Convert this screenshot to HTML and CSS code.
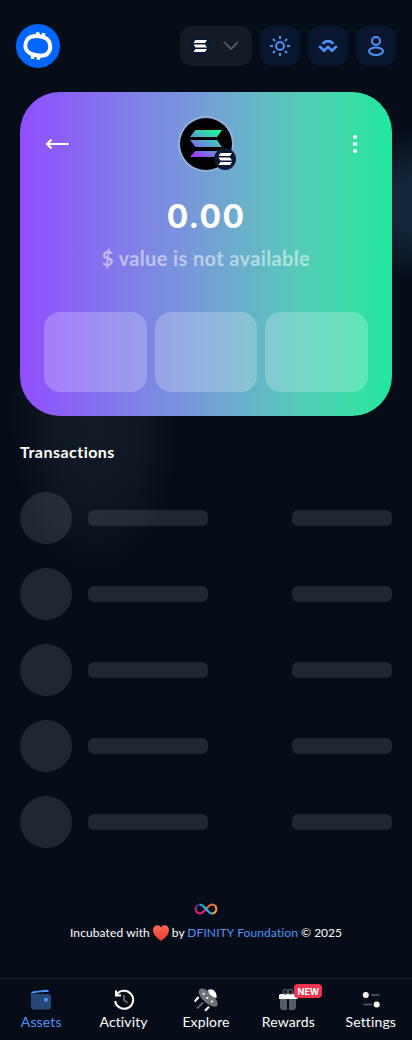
FILE: index.html
```html
<!DOCTYPE html>
<html lang="en">
<head>
<meta charset="utf-8">
<meta name="viewport" content="width=device-width, initial-scale=1">
<title>Wallet</title>
<link rel="stylesheet" href="styles.css">
</head>
<body>
<svg class="defs" width="0" height="0" aria-hidden="true">
  <defs>
    <linearGradient id="sol" gradientUnits="userSpaceOnUse" x1="36" y1="8" x2="16" y2="44"><stop offset=".1" stop-color="#19fb9b"/><stop offset=".85" stop-color="#9945ff"/></linearGradient>
    <linearGradient id="inf-left" x1="0" y1="1" x2="0" y2="0"><stop offset=".2" stop-color="#ed1e79"/><stop offset="1" stop-color="#522785"/></linearGradient>
    <linearGradient id="inf-right" x1="0" y1="0" x2="1" y2="1"><stop offset="0" stop-color="#f15a24"/><stop offset="1" stop-color="#fbb03b"/></linearGradient>
    <linearGradient id="heart" x1="0" y1="0" x2="0" y2="1"><stop offset="0" stop-color="#ff6a58"/><stop offset="1" stop-color="#e83b30"/></linearGradient>
    <symbol id="solana" viewBox="0 0 14 12"><path d="M2.500 0H14l-2 3H.5zM.5 4.500h11.500L14 7.500H2.500zM2.500 9H14l-2 3H.5z"/></symbol>
  </defs>
</svg>
<div class="app">
  <header class="header">
    <svg class="logo" viewBox="0 0 44 44">
      <circle cx="22" cy="22" r="22" fill="#06f"/>
      <g fill="none" stroke="#fff" stroke-width="4">
        <path d="M17.500 12.300C22 11.500 31 13 33 17.500C34.800 21.500 34.500 25.500 32.500 28.500C30.500 31.200 27 32 23 31.500C17.500 31 11 28.800 9.800 24.500C8.800 21 10 16.500 12.500 14.300C14 13 15.700 12.600 17.500 12.300Z"/>
        <path stroke-width="3.600" d="M22 8.200L21.400 12M27.800 9.200L27 13M17 30.500L16.400 34.800M22.700 32L22.200 35.800"/>
      </g>
    </svg>
    <div class="actions">
      <button class="network" aria-label="Network">
        <span class="net-badge"><svg width="14" height="12" fill="#fff"><use href="#solana"/></svg></span>
        <svg width="16" height="10" viewBox="0 0 16 10" fill="none" stroke="#596069" stroke-width="1.600"><path d="M1 1l7 7 7-7"/></svg>
      </button>
      <button class="icon-btn" aria-label="Theme"><svg width="20" height="20" viewBox="0 0 20 20" fill="none" stroke="#4f92f8" stroke-width="2"><circle cx="10" cy="10" r="3.900"/><path d="M10 0v3M10 17v3M0 10h3M17 10h3M3 3l2 2M15 15l2 2M3 17l2-2M15 5l2-2"/></svg></button>
      <button class="icon-btn" aria-label="WalletConnect"><svg width="20" height="14" viewBox="0 0 20 14" fill="none" stroke="#4f92f8" stroke-width="2.600"><path d="M4.700 5c2.800-3.800 7.800-3.800 10.600 0M1.200 7l4.900 4.600L10 7.800l3.900 3.800L18.800 7"/></svg></button>
      <button class="icon-btn" aria-label="Account"><svg width="18" height="20" viewBox="0 0 18 20" fill="none" stroke="#4f92f8" stroke-width="2"><circle cx="9" cy="5" r="4"/><ellipse cx="9" cy="15.200" rx="7" ry="3.800"/></svg></button>
    </div>
  </header>

  <main>
    <section class="hero">
      <div class="hero-top">
        <svg class="back" width="24" height="12" viewBox="0 0 24 12" fill="none" stroke="#fff" stroke-width="2"><path d="M2 6H23.500M6.500 1.500L2 6L6.500 10.500"/></svg>
        <div class="token">
          <svg width="52" height="52" viewBox="0 0 52 52"><circle cx="26" cy="26" r="26"/><path fill="url(#sol)" d="M15.500 12H42l-5 7H10zM10 22h27l5 7H15.500zM15.500 33H42l-5 6H10z"/></svg>
          <span class="token-badge"><svg width="14" height="12" fill="#fff"><use href="#solana"/></svg></span>
        </div>
        <svg class="more" width="4" height="18" viewBox="0 0 4 18" fill="#fff"><circle cx="2" cy="2" r="2"/><circle cx="2" cy="9" r="2"/><circle cx="2" cy="16" r="2"/></svg>
      </div>
      <div class="amount">0.00</div>
      <div class="fiat">$ value is not available</div>
      <div class="tiles"><span></span><span></span><span></span></div>
    </section>

    <h2>Transactions</h2>
    <ul class="rows">
      <li><i></i><b></b><em></em></li>
      <li><i></i><b></b><em></em></li>
      <li><i></i><b></b><em></em></li>
      <li><i></i><b></b><em></em></li>
      <li><i></i><b></b><em></em></li>
    </ul>
  </main>

  <footer class="footer">
    <svg width="24" height="12" viewBox="0 0 24 12" fill="none" stroke-width="2.200"><path stroke="url(#inf-left)" d="M12 6C9 9.300 7.900 10.500 6.200 10.500a4.500 4.500 0 0 1 0-9"/><path stroke="url(#inf-right)" d="M12 6c3-3.300 4.100-4.500 5.800-4.500a4.500 4.500 0 0 1 0 9"/><path stroke="#29abe2" d="M5.700 1.500c3 0 3.700 1.500 6.300 4.500s3.300 4.500 6.300 4.500"/></svg>
    <p><span class="f-a">Incubated with</span><svg width="18" height="16" viewBox="0 0 18 16"><path fill="url(#heart)" d="M9 16C5 13 1 9.500 1 5c0-5 6-6.500 8-2.400C11 -1.500 17 0 17 5c0 4.500-4 8-8 11z"/></svg><span class="f-b">by</span><a class="f-c">DFINITY Foundation</a><span class="f-d">© 2025</span></p>
  </footer>
</div>

<nav class="nav">
  <a class="item active"><svg width="24" height="24" viewBox="0 0 24 24"><path fill="#274779" d="M2 6h17q3 0 3 3v10q0 2.500-3 2.500H5q-3 0-3-2.500z"/><path fill="#4f92f8" d="M2 6c0-1.800 1-2.500 3-2.800l12-1.500c2-.2 2.900.5 2.900 2.500C15 3.500 8 4 2 6z"/><circle cx="17" cy="11.700" r="2" fill="#4f92f8"/></svg><span>Assets</span></a>
  <a class="item"><svg width="24" height="24" viewBox="0 0 24 24" fill="none" stroke="#fff" stroke-width="2"><path d="M4.500 7A9 9 0 1 1 3.200 13M4 2.500V7.500H9"/><path stroke="#596069" d="M12 7v5l3.500 3"/></svg><span>Activity</span></a>
  <a class="item"><svg width="24" height="24" viewBox="0 0 24 24"><path fill="#6d747c" d="M5.500 1.500C8-.5 12 1 15 4l5 5c3 3 4.500 7 3 9-3 2-8-.5-12-4S3 4.500 5.500 1.500z"/><path fill="#fff" d="M14 2c4.500-3 9.500 2.500 8.500 8-4-.5-8-4-8.500-8z"/><g fill="#fff"><circle cx="9.700" cy="5.800" r="1.100"/><circle cx="13.300" cy="10" r="1.100"/><circle cx="18" cy="13.500" r="1.100"/></g><path stroke="#fff" stroke-width="2" d="M.7 13.500l4-4.500M11 22.700l4-4"/><path stroke="#596069" stroke-width="2" d="M3 20.500l6-6"/></svg><span>Explore</span></a>
  <a class="item"><span class="gift"><svg width="24" height="24" viewBox="0 0 24 24"><path fill="#555c65" d="M4 11h7v11H7q-3 0-3-3zM13 11h7v8q0 3-3 3h-4z"/><path fill="#fff" d="M4.500 6H20q1.500 0 1.500 1.500V11H3V7.500Q3 6 4.500 6z"/><g fill="none" stroke="#555c65" stroke-width="1.300"><circle cx="9.300" cy="3.700" r="2.300"/><circle cx="14.500" cy="3.700" r="2.300"/></g></svg><b class="new">NEW</b></span><span>Rewards</span></a>
  <a class="item"><svg width="24" height="24" viewBox="0 0 24 24"><path stroke="#596069" stroke-width="1.500" d="M12 7h8.500M4.500 16.500h8.500"/><circle cx="6.800" cy="7" r="3" fill="#fff"/><circle cx="17.700" cy="16.500" r="3" fill="#fff"/></svg><span>Settings</span></a>
</nav>
</body>
</html>
```
FILE: styles.css
```css
* { box-sizing: border-box; }
body {
  margin: 0;
  height: 1040px;
  overflow: hidden;
  display: flex;
  flex-direction: column;
  color: #fff;
  font-family: Lato, "Open Sans", sans-serif;
  font-variant-ligatures: none;
  background:
    radial-gradient(ellipse 60px 75px at 412px 205px, #14253a 35%, transparent),
    radial-gradient(ellipse 85px 160px at 95px 415px, rgba(24,34,43,.7), rgba(24,34,43,.5) 50%, transparent),
    #060d19;
}
.defs { position: absolute; }
svg { display: block; flex: none; }
button { border: 0; padding: 0; }
.app { flex: 1; display: flex; flex-direction: column; }
.header {
  height: 92px;
  padding: 0 16px;
  display: flex;
  align-items: center;
  justify-content: space-between;
}
.logo { width: 44px; height: 44px; }
.actions { display: flex; gap: 8px; }
.network, .icon-btn {
  height: 40px;
  border-radius: 12px;
  display: flex;
  align-items: center;
  justify-content: center;
}
.network { width: 72px; gap: 13px; background: #141b24; padding-right: 3px; }
.icon-btn { width: 40px; background: #08172e; }
.net-badge, .token-badge {
  display: flex;
  align-items: center;
  justify-content: center;
  border-radius: 50%;
  background: #0a1930;
}
.net-badge { width: 20px; height: 20px; }
main { padding: 0 20px; }
.hero {
  height: 324px;
  padding: 24px;
  border-radius: 40px;
  text-align: center;
  background: linear-gradient(90deg, #904eff 0%, #8377eb 25%, #759fd6 50%, #56cbb8 75%, #3fdba9 88%, #20e89e 100%);
}
.hero-top { display: grid; grid-template-columns: 1fr 56px 1fr; align-items: center; height: 56px; padding: 0 1px; }
.more { justify-self: end; margin-right: 10px; }
.token {
  position: relative;
  width: 56px;
  height: 56px;
  padding: 2px;
  border-radius: 50%;
  background: #8fb5de;
}
.token-badge { position: absolute; right: -2px; bottom: 2px; width: 22px; height: 22px; }
.amount {
  margin-top: 21px;
  height: 47px;
  line-height: 48px;
  font-family: Inter, sans-serif;
  font-size: 32px;
  font-weight: 700;
  letter-spacing: 1.3px;
}
.fiat {
  height: 36px;
  line-height: 36px;
  font-size: 20px;
  font-weight: 700;
  letter-spacing: .37px;
  color: rgba(255,255,255,.5);
  white-space: nowrap;
}
.tiles { display: grid; grid-template-columns: repeat(3, 1fr); gap: 8px; margin-top: 36px; }
.tiles span { height: 80px; border-radius: 16px; background: rgba(255,255,255,.22); }
h2 { margin: 24px 0 0; height: 24px; line-height: 24px; font-size: 16px; font-weight: 700; letter-spacing: .48px; }
.rows { list-style: none; margin: 28px 0 0; padding: 0; display: grid; gap: 24px; }
.rows li { display: flex; align-items: center; height: 52px; }
.rows i { width: 52px; height: 52px; border-radius: 50%; background: rgba(255,255,255,.11); }
.rows b, .rows em { height: 16px; border-radius: 6px; background: rgba(255,255,255,.11); }
.rows b { width: 120px; margin-left: 16px; }
.rows em { width: 100px; margin-left: auto; }
.footer { margin-top: 55px; display: flex; flex-direction: column; align-items: center; font-size: 12px; }
.footer p { margin: 8px 0 0; height: 20px; width: 272px; display: flex; align-items: center; white-space: nowrap; line-height: 20px; }
.footer a { color: #4f92f8; }
.footer p svg { margin: 0 2px 0 2px; }
.f-a { width: 80px; letter-spacing: .1px; }
.f-b { width: 16px; }
.f-c { width: 111px; margin-right: 3px; letter-spacing: .12px; }
.nav {
  height: 62px;
  border-top: 1px solid #1d242e;
  display: grid;
  grid-template-columns: repeat(5, 1fr);
  padding-top: 9px;
}
.item { display: flex; flex-direction: column; align-items: center; font-size: 14px; line-height: 20px; letter-spacing: .12px; }
.active { color: #4f92f8; }
.gift { position: relative; }
.new {
  position: absolute;
  left: 18px;
  top: -4px;
  width: 28px;
  height: 14px;
  border-radius: 4px;
  background: #ee3550;
  font-family: Inter, sans-serif;
  font-size: 9px;
  letter-spacing: 0;
  line-height: 15px;
  text-align: center;
}
```
